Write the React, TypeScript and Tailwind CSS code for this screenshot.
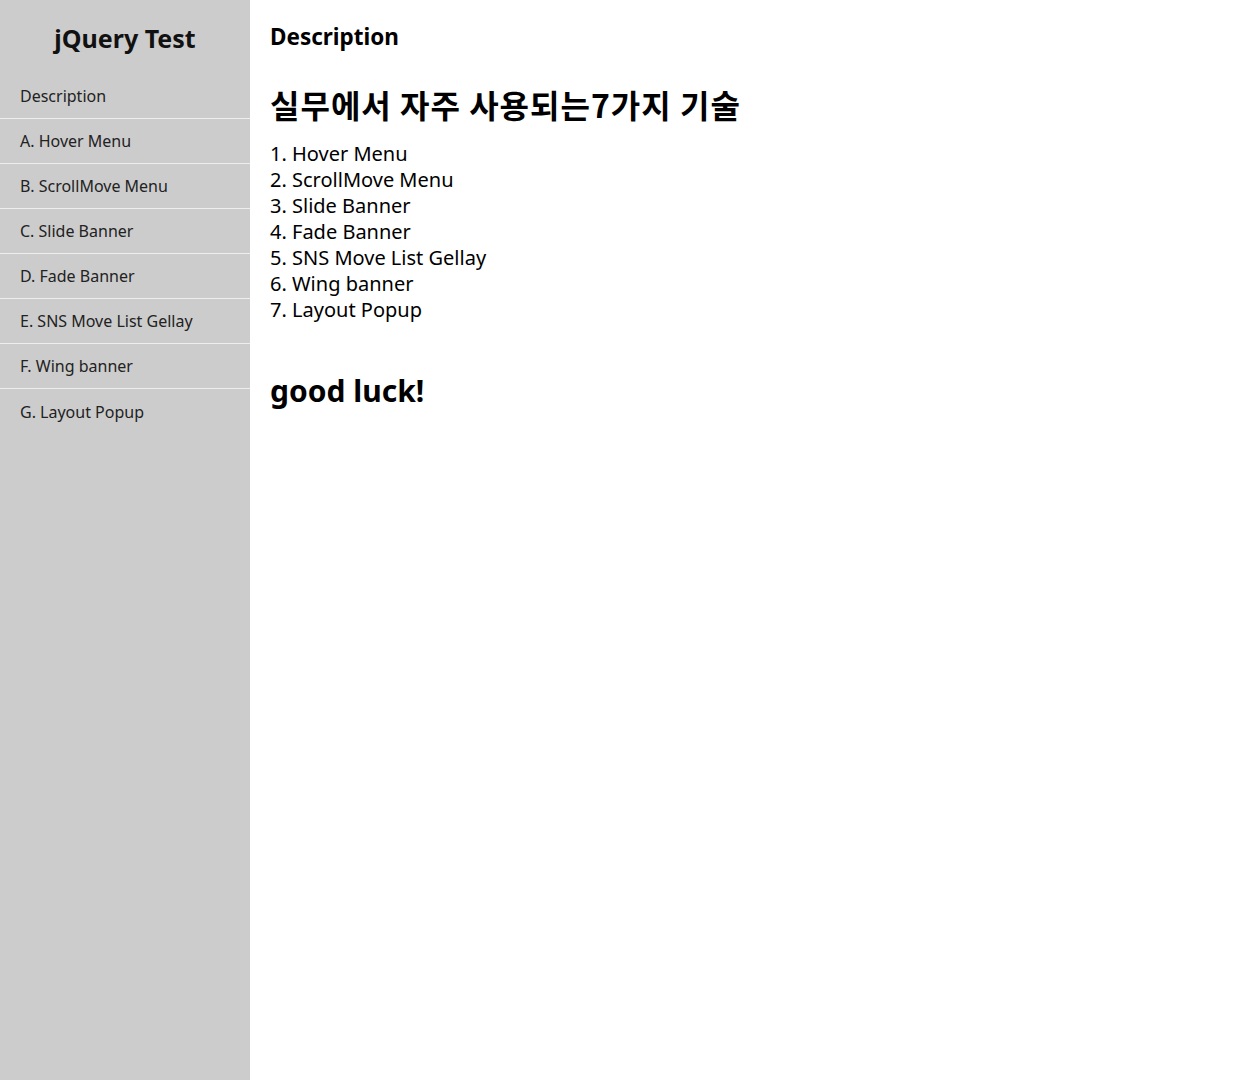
import React from "react";

const menu = [
  "Description",
  "A. Hover Menu",
  "B. ScrollMove Menu",
  "C. Slide Banner",
  "D. Fade Banner",
  "E. SNS Move List Gellay",
  "F. Wing banner",
  "G. Layout Popup",
];

const items = [
  "Hover Menu",
  "ScrollMove Menu",
  "Slide Banner",
  "Fade Banner",
  "SNS Move List Gellay",
  "Wing banner",
  "Layout Popup",
];

export default function App() {
  return (
    <div
      className="flex min-h-[1080px] w-full bg-white text-black"
      style={{ fontFamily: '"Noto Sans", "Noto Sans CJK KR", sans-serif' }}
    >
      <aside className="w-[250px] shrink-0 bg-[#cccccc]">
        <div className="flex h-[74px] items-center justify-center pt-[2px]">
          <h1 className="text-[25px] font-bold leading-none text-[#111]">jQuery Test</h1>
        </div>
        <ul>
          {menu.map((m, i) => (
            <li
              key={m}
              className={`flex h-[45px] items-center pl-[20px] text-[16px] text-[#222] ${
                i < menu.length - 1 ? "border-b border-[#eeeeee]" : ""
              }`}
            >
              {m}
            </li>
          ))}
        </ul>
      </aside>
      <main className="flex-1 pl-[20px] pt-[21px]">
        <h2 className="text-[22.5px] font-bold leading-[32px]">Description</h2>
        <h3
          className="mt-[31px] text-[32px] font-bold leading-[40px] tracking-[1px]"
          style={{ fontFamily: '"Noto Sans CJK KR", sans-serif' }}
        >
          실무에서 자주 사용되는7가지 기술
        </h3>
        <ol className="mt-[17px]">
          {items.map((t, i) => (
            <li key={t} className="text-[20px] leading-[26px]">
              {i + 1}. {t}
            </li>
          ))}
        </ol>
        <h3 className="mt-[48px] text-[30px] font-bold leading-[40px]">good luck!</h3>
      </main>
    </div>
  );
}
